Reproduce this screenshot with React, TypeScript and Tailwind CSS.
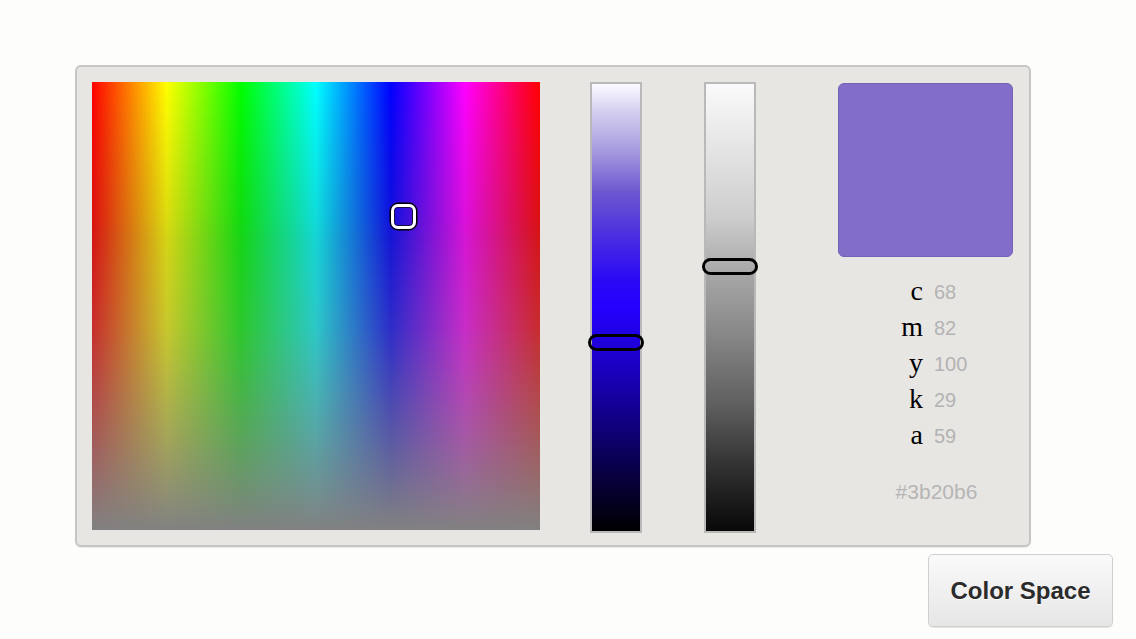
import React from 'react';

const HUE_BG =
  'bg-[linear-gradient(to_bottom,rgba(128,128,128,0)_0%,rgba(128,128,128,0.12)_30%,rgba(128,128,128,0.35)_55%,rgba(128,128,128,0.7)_80%,#818181_100%),linear-gradient(to_bottom,rgba(0,0,0,0)_0%,rgba(0,0,0,0.1)_35%,rgba(0,0,0,0)_100%),linear-gradient(to_right,#ff0000_0%,#ffff00_16.7%,#00ff00_33.3%,#00ffff_50%,#0000ff_66.7%,#ff00ff_83.3%,#ff0000_100%)]';

const Slider: React.FC<{ bg: string; handleTop: number }> = ({ bg, handleTop }) => (
  <div className="relative w-[52px] h-[451px]">
    <div className={`w-full h-full border-2 border-[#b9b9b9] ${bg}`} />
    <div
      className="absolute left-[-2px] w-[56px] h-[17px] rounded-full border-[3px] border-black"
      style={{ top: handleTop }}
    />
  </div>
);

const rows: [string, string][] = [
  ['c', '68'],
  ['m', '82'],
  ['y', '100'],
  ['k', '29'],
  ['a', '59'],
];

export default function App() {
  return (
    <div className="w-[1136px] h-[639px] bg-[#fdfdfc] overflow-hidden pt-[65px] pl-[75px] font-['Liberation_Sans',Arial,sans-serif]">
      <div className="w-[956px] h-[482px] rounded-[6px] border-2 border-[#c6c6c4] bg-[#e8e6e3] pt-[15px] pl-[15px] flex items-start shadow-[0_1px_1px_rgba(0,0,0,0.08)]">
        {/* hue / saturation square */}
        <div className={`relative w-[448px] h-[448px] shrink-0 ${HUE_BG}`}>
          <div className="absolute left-[299px] top-[122px] w-[25px] h-[25px] rounded-[7px] border-[3px] border-white shadow-[0_0_0_1.5px_#000,inset_0_0_0_1px_#1a1040]" />
        </div>

        <div className="ml-[50px]">
          <Slider
            bg="bg-[linear-gradient(to_bottom,#fbfbff_0%,#d6d0f0_6%,#a69ade_15%,#6e58d0_24%,#4a2ee0_34%,#2a08f5_44%,#2400ff_50%,#1c00c8_62%,#12008a_74%,#080048_86%,#000000_100%)]"
            handleTop={252}
          />
        </div>

        <div className="ml-[62px]">
          <Slider
            bg="bg-[linear-gradient(to_bottom,#fafafa_0%,#e8e8e8_12%,#cdcdcd_30%,#a8a8a8_42%,#8a8a8a_55%,#5e5e5e_72%,#303030_86%,#080808_100%)]"
            handleTop={176}
          />
        </div>

        {/* preview + values */}
        <div className="ml-[82px] w-[175px] flex flex-col items-stretch pt-[1px]">
          <div className="w-[175px] h-[174px] rounded-[6px] bg-[#826dc8] border border-[#7461b8]" />
          <div className="mt-[17px] grid grid-cols-2 gap-x-[11px] pl-[6px]">
            {rows.map(([l, v]) => (
              <React.Fragment key={l}>
                <div className="h-[36px] flex items-center justify-end text-[28px] leading-none text-black font-['Liberation_Serif','Times_New_Roman',serif] pb-[2px]">
                  {l}
                </div>
                <div className="h-[36px] flex items-center text-[20px] leading-none text-[#b3b3b3]">
                  {v}
                </div>
              </React.Fragment>
            ))}
          </div>
          <div className="mt-[26px] h-[24px] flex items-center justify-center pl-[22px] text-[21px] text-[#b5b5b5]">
            #3b20b6
          </div>
        </div>
      </div>

      <div className="ml-[853px] mt-[7px]">
        <button className="w-[185px] h-[73px] rounded-[5px] border border-[#cfcfcf] bg-[linear-gradient(to_bottom,#fafafa,#e6e6e6)] text-[24px] font-bold text-[#2b2b2b] [text-shadow:0_1px_0_#fff] shadow-[0_1px_1px_rgba(0,0,0,0.1)]">
          Color Space
        </button>
      </div>
    </div>
  );
}
